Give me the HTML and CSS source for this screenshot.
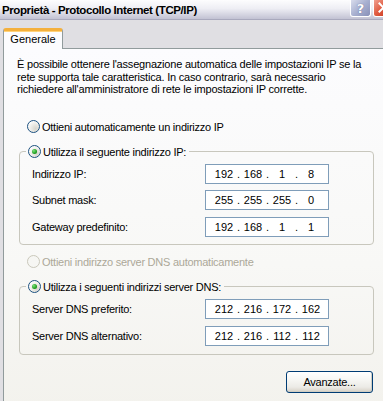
FILE: index.html
```html
<!DOCTYPE html>
<html lang="it">
<head>
<meta charset="utf-8">
<title>Proprietà - Protocollo Internet (TCP/IP)</title>
<link rel="stylesheet" href="styles.css">
</head>
<body>
<div class="window">
  <div class="titlebar">
    <span class="title">Proprietà - Protocollo Internet (TCP/IP)</span>
    <div class="caption-buttons">
      <span class="cbtn help">?</span>
      <span class="cbtn close"><svg width="21" height="18" viewBox="0 0 21 18"><path d="M6 4 L15 13 M15 4 L6 13" stroke="#fff" stroke-width="2.2" stroke-linecap="square"/></svg></span>
    </div>
  </div>
  <div class="tabs"><div class="tab">Generale</div></div>
  <div class="panel">
    <p class="intro">È possibile ottenere l'assegnazione automatica delle impostazioni IP se la<br>rete supporta tale caratteristica. In caso contrario, sarà necessario<br>richiedere all'amministratore di rete le impostazioni IP corrette.</p>
    <div class="radio first"><span class="circle"></span><span>Ottieni automaticamente un indirizzo IP</span></div>
    <fieldset class="group">
      <legend><span class="radio"><span class="circle on"></span><span>Utilizza il seguente indirizzo IP:</span></span></legend>
      <div class="rows">
        <div class="row"><span class="lbl">Indirizzo IP:</span><span class="ip"><span>192</span><i>.</i><span>168</span><i>.</i><span>1</span><i>.</i><span>8</span></span></div>
        <div class="row"><span class="lbl">Subnet mask:</span><span class="ip"><span>255</span><i>.</i><span>255</span><i>.</i><span>255</span><i>.</i><span>0</span></span></div>
        <div class="row"><span class="lbl">Gateway predefinito:</span><span class="ip"><span>192</span><i>.</i><span>168</span><i>.</i><span>1</span><i>.</i><span>1</span></span></div>
      </div>
    </fieldset>
    <div class="radio disabled"><span class="circle"></span><span>Ottieni indirizzo server DNS automaticamente</span></div>
    <fieldset class="group dns">
      <legend><span class="radio"><span class="circle on"></span><span>Utilizza i seguenti indirizzi server DNS:</span></span></legend>
      <div class="rows">
        <div class="row"><span class="lbl">Server DNS preferito:</span><span class="ip"><span>212</span><i>.</i><span>216</span><i>.</i><span>172</span><i>.</i><span>162</span></span></div>
        <div class="row"><span class="lbl">Server DNS alternativo:</span><span class="ip"><span>212</span><i>.</i><span>216</span><i>.</i><span>112</span><i>.</i><span>112</span></span></div>
      </div>
    </fieldset>
    <div class="actions"><button class="btn" type="button">Avanzate...</button></div>
  </div>
</div>
</body>
</html>
```
FILE: styles.css
```css
html, body {
  margin: 0;
  padding: 0;
}
body {
  width: 383px;
  height: 401px;
  overflow: hidden;
  background: #e0dfe3;
  font-family: "Liberation Sans", Arial, sans-serif;
  font-size: 11px;
  color: #000;
}
.window {
  width: 383px;
  height: 401px;
  overflow: hidden;
}
.titlebar {
  height: 19px;
  border-bottom: 1px solid #a9a9bd;
  background: linear-gradient(#fdfdfe 0%, #eeeef4 45%, #d6d6e2 75%, #c2c2d3 100%);
  display: flex;
  align-items: center;
  overflow: hidden;
}
.title {
  margin-left: 2px;
  font-family: "Liberation Sans", Arial, sans-serif;
  font-weight: bold;
  font-size: 11.5px;
  letter-spacing: -0.4px;
  white-space: nowrap;
  color: #000;
}
.caption-buttons {
  margin-left: auto;
  display: flex;
  gap: 2px;
  align-self: flex-start;
  margin-right: -11px;
}
.cbtn {
  width: 21px;
  height: 17px;
  box-sizing: border-box;
  border: 1px solid #fff;
  border-top: none;
  border-radius: 0 0 3px 3px;
  display: flex;
  align-items: center;
  justify-content: center;
}
.help {
  background: linear-gradient(135deg, #d8dcec 0%, #a8b0d0 50%, #8890b8 100%);
  color: #fff;
  font-weight: bold;
  font-size: 13px;
  font-family: "DejaVu Sans", sans-serif;
  text-shadow: 0 0 1px #4a5080;
}
.close {
  background: linear-gradient(135deg, #f0a090 0%, #e05a40 45%, #c03018 100%);
}
.tabs {
  margin-top: 8px;
  padding-left: 3px;
  display: flex;
}
.tab {
  position: relative;
  z-index: 1;
  width: 60px;
  height: 21px;
  margin-bottom: -1px;
  box-sizing: border-box;
  background: #fcfcfe;
  border: 1px solid #919b9c;
  border-bottom: none;
  border-top: 3px solid #f4b03c;
  border-radius: 3px 3px 0 0;
  box-shadow: inset 0 1px 0 #ffd27a;
  text-align: center;
  line-height: 16px;
  font-size: 11px;
}
.panel {
  margin-left: 3px;
  height: 360px;
  box-sizing: border-box;
  border: 1px solid #919b9c;
  border-right: none;
  border-bottom: none;
  background: linear-gradient(#fcfcfe 0%, #f8f8f6 60%, #f3f2ed 100%);
  padding: 9px 0 0 13px;
}
.intro {
  margin: 0;
  line-height: 12.5px;
  white-space: nowrap;
  letter-spacing: -0.2px;
}
.radio {
  display: flex;
  align-items: center;
  gap: 2px;
  height: 16px;
  white-space: nowrap;
  letter-spacing: -0.25px;
}
.radio.first {
  margin-top: 23px;
  margin-left: 10px;
}
.radio.disabled {
  margin-top: 9px;
  margin-left: 10px;
  color: #aca899;
}
.circle {
  width: 13px;
  height: 13px;
  box-sizing: border-box;
  border-radius: 50%;
  border: 1px solid #1c5180;
  background: radial-gradient(circle at 70% 70%, #d6d4cc 0%, #eeede8 45%, #ffffff 80%);
  display: flex;
  align-items: center;
  justify-content: center;
  flex: none;
}
.disabled .circle {
  border-color: #cac8bb;
  background: #f6f6f3;
}
.circle.on::after {
  content: "";
  width: 5px;
  height: 5px;
  border-radius: 50%;
  background: radial-gradient(circle at 35% 35%, #7ce07c 0%, #21a121 60%, #1a7f1a 100%);
}
.group {
  margin: 9px 0 0 2px;
  width: 355px;
  box-sizing: border-box;
  padding: 0;
  border: 1px solid #c8c7bd;
  border-radius: 4px;
  min-width: 0;
}
.group legend {
  margin-left: 6px;
  padding: 0 3px 0 2px;
}
.rows {
  padding: 4px 0 7px 12px;
  display: flex;
  flex-direction: column;
  gap: 6.5px;
}
.dns .rows {
  gap: 7px;
  padding-bottom: 8px;
}
.row {
  display: flex;
  align-items: center;
  height: 20px;
}
.lbl {
  width: 173px;
  letter-spacing: -0.25px;
  white-space: nowrap;
}
.ip {
  display: flex;
  align-items: center;
  width: 124px;
  height: 20px;
  box-sizing: border-box;
  border: 1px solid #7f9db9;
  background: #fff;
  padding-left: 7px;
}
.ip span {
  width: 22px;
  text-align: center;
}
.ip i {
  width: 7px;
  text-align: center;
  font-style: normal;
}
.actions {
  margin-top: 16px;
  padding-left: 269px;
}
.btn {
  width: 87px;
  height: 22px;
  box-sizing: border-box;
  border: 1px solid #003c74;
  border-radius: 3px;
  background: linear-gradient(#ffffff 0%, #f6f6f3 40%, #ecebe6 75%, #d6d0c5 100%);
  box-shadow: inset -1px -1px 0 #d0cec4;
  font-family: "Liberation Sans", Arial, sans-serif;
  font-size: 11px;
  letter-spacing: -0.25px;
  color: #000;
  padding: 0;
  margin: 0;
}
```
